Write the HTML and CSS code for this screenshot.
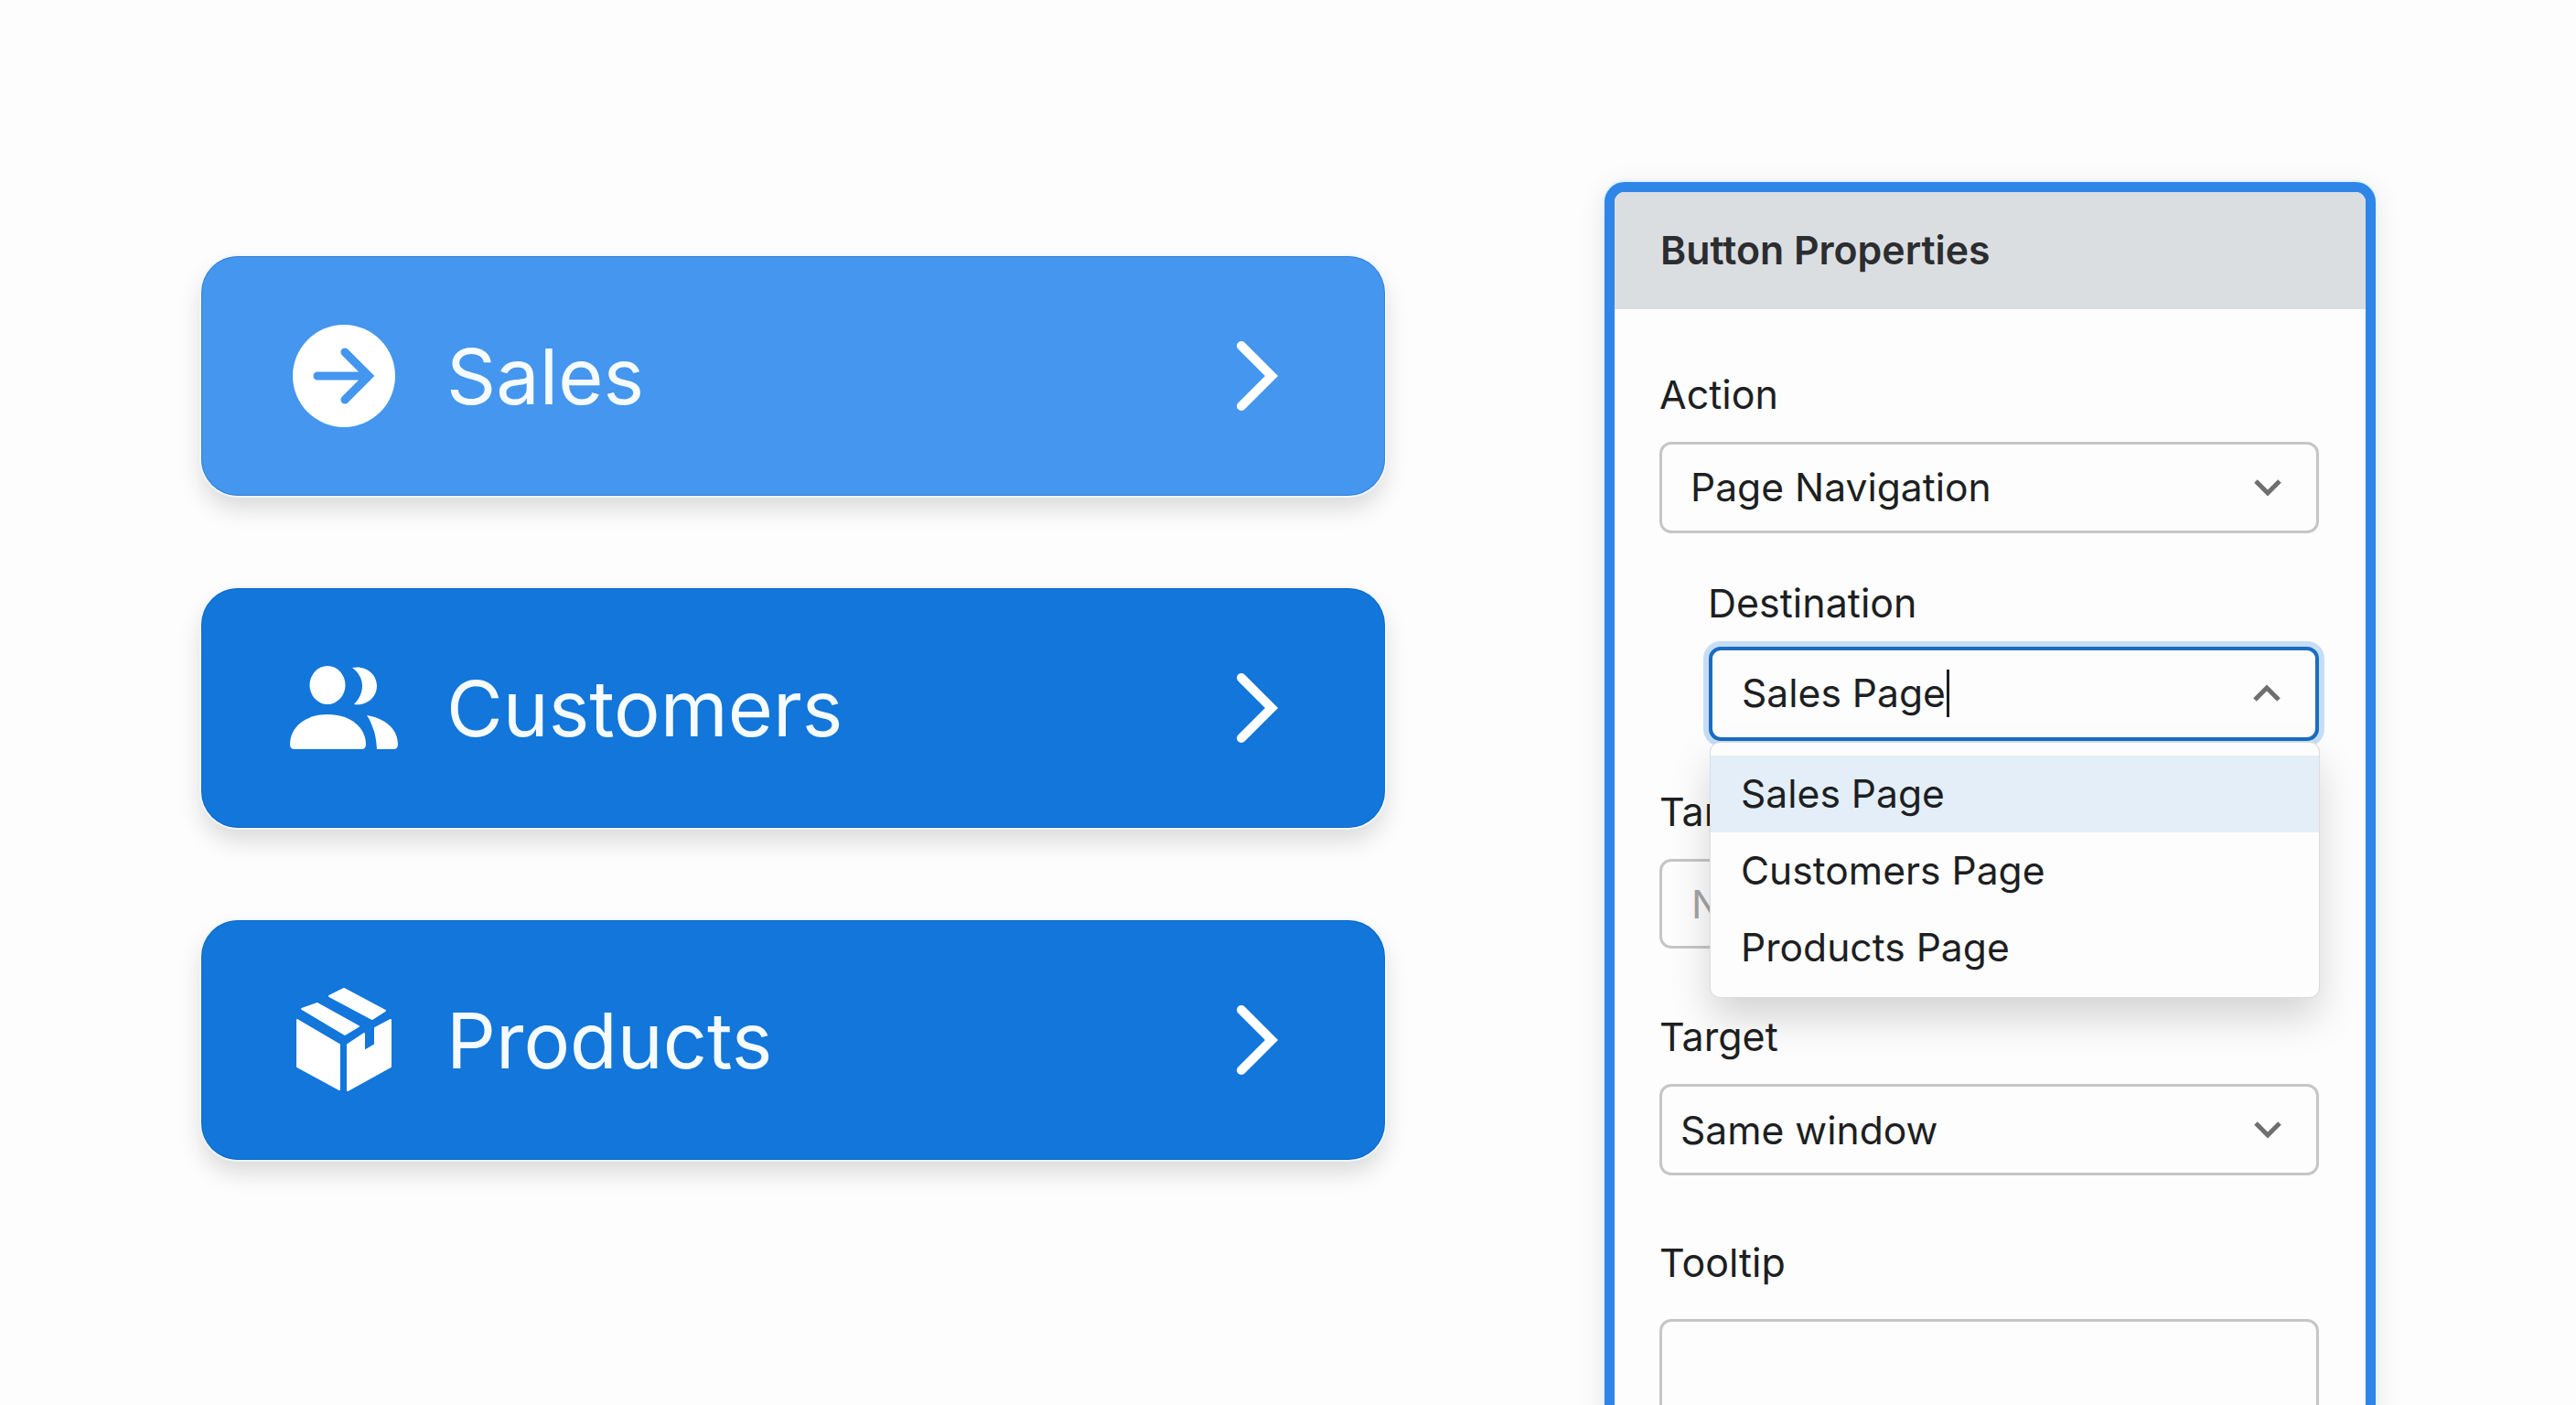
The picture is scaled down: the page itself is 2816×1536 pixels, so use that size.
FILE: index.html
```html
<!DOCTYPE html>
<html lang="en">
<head>
<meta charset="utf-8">
<title>Button Properties</title>
<link rel="stylesheet" href="styles.css">
</head>
<body>
<main class="page">
  <section class="nav-list">
    <a class="nav-btn nav-btn-light">
      <svg class="nav-icon" viewBox="316 351 120 120" width="120" height="120">
        <circle cx="376" cy="411" r="56" fill="#fff"/>
        <path d="M347 411H403M377 385L403 411L377 437" fill="none" stroke="#4496ee" stroke-width="9" stroke-linecap="round" stroke-linejoin="miter"/>
      </svg>
      <span class="nav-label">Sales</span>
      <svg class="nav-chevron" viewBox="0 0 50 80" width="50" height="80"><path d="M8 7L41 40L8 73" fill="none" stroke="#fff" stroke-width="10" stroke-linecap="round"/></svg>
    </a>
    <a class="nav-btn">
      <svg class="nav-icon" viewBox="316 715 120 120" width="120" height="120" fill="#fff">
        <ellipse cx="358" cy="750" rx="19.5" ry="21"/>
        <path d="M385 731C400 728 412 738 412 751C412 764 400 773 387 771C393 765 396 758 396 751C396 743 392 736 385 731Z"/>
        <path d="M317 815C317 795 335 782 358 782C383 782 400 796 400 815Q400 820 395 820H322Q317 820 317 815Z"/>
        <path d="M401 783C420 786 435 797 435 815Q435 820 430 820H412Q411 805 408 798C406 792 404 787 401 783Z"/>
      </svg>
      <span class="nav-label">Customers</span>
      <svg class="nav-chevron" viewBox="0 0 50 80" width="50" height="80"><path d="M8 7L41 40L8 73" fill="none" stroke="#fff" stroke-width="10" stroke-linecap="round"/></svg>
    </a>
    <a class="nav-btn">
      <svg class="nav-icon" viewBox="316 1078 120 120" width="120" height="120" fill="#fff" stroke="#fff" stroke-width="2" stroke-linejoin="round">
        <path d="M325 1116L371 1143V1192L325 1167Z"/>
        <path d="M380 1143L398 1131V1150L410 1143V1125L427 1116V1167L380 1193Z"/>
        <path d="M330 1104L347 1098L392 1123L377 1132Z"/>
        <path d="M360 1090L376 1082L421 1106L407 1115Z"/>
      </svg>
      <span class="nav-label">Products</span>
      <svg class="nav-chevron" viewBox="0 0 50 80" width="50" height="80"><path d="M8 7L41 40L8 73" fill="none" stroke="#fff" stroke-width="10" stroke-linecap="round"/></svg>
    </a>
  </section>

  <aside class="panel">
    <header class="panel-head"><h2 class="panel-title">Button Properties</h2></header>
    <div class="panel-body">
      <div class="field">
        <label class="label">Action</label>
        <div class="select select-nav"><span>Page Navigation</span>
          <svg class="caret-icon" viewBox="0 0 32 20" width="32" height="20"><path d="M3 3L16 16L29 3" fill="none" stroke="#6f6f6f" stroke-width="5"/></svg>
        </div>
      </div>
      <div class="field field-dest">
        <label class="label label-dest">Destination</label>
        <div class="combo">
          <div class="select select-focus"><span class="typed">Sales Page<i class="text-cursor"></i></span>
            <svg class="caret-icon" viewBox="0 0 32 20" width="32" height="20"><path d="M3 17L16 4L29 17" fill="none" stroke="#6f6f6f" stroke-width="5"/></svg>
          </div>
          <ul class="menu">
            <li class="menu-item menu-item-active">Sales Page</li>
            <li class="menu-item">Customers Page</li>
            <li class="menu-item">Products Page</li>
          </ul>
        </div>
      </div>
      <div class="field field-hidden">
        <label class="label">Target</label>
        <div class="select select-muted"><span>None</span></div>
      </div>
      <div class="field field-target">
        <label class="label">Target</label>
        <div class="select select-same"><span>Same window</span>
          <svg class="caret-icon" viewBox="0 0 32 20" width="32" height="20"><path d="M3 3L16 16L29 3" fill="none" stroke="#6f6f6f" stroke-width="5"/></svg>
        </div>
      </div>
      <div class="field field-tooltip">
        <label class="label">Tooltip</label>
        <div class="textarea"></div>
      </div>
    </div>
  </aside>
</main>
</body>
</html>
```
FILE: styles.css
```css
* { box-sizing: border-box; }
html, body { margin: 0; padding: 0; }
body {
  background: #fdfdfd;
  font-family: Inter, "Liberation Sans", sans-serif;
  color: #1d1f22;
  overflow: hidden;
}
.page {
  display: flex;
  align-items: flex-start;
  width: 2816px;
  height: 1536px;
  overflow: hidden;
}
.nav-list {
  display: flex;
  flex-direction: column;
  gap: 101px;
  flex: none;
  width: 1294px;
  margin: 280px 0 0 220px;
}
.nav-btn {
  display: flex;
  align-items: center;
  height: 262px;
  padding: 0 115px 0 96px;
  border-radius: 40px;
  background: #1276da;
  color: #f6fbff;
  box-shadow: inset 0 0 0 1px rgba(0, 50, 110, .22), 0 0 0 2px #eef7ff, 0 14px 26px rgba(0, 0, 0, .14);
}
.nav-btn-light { background: #4496ee; }
.nav-icon { flex: none; }
.nav-label {
  flex: 1;
  margin-left: 52px;
  font-size: 84.5px;
  line-height: 100px;
}
.nav-chevron { flex: none; }
.panel {
  flex: none;
  width: 843px;
  height: 1420px;
  margin: 199px 0 0 240px;
  border: 11px solid #2f86e8;
  border-radius: 22px;
  background: #fdfdfd;
  overflow: hidden;
  box-shadow: 0 0 0 2px #dff3ff, 0 6px 30px rgba(0, 0, 0, .1);
}
.panel-head {
  display: flex;
  align-items: center;
  height: 128px;
  padding: 0 48px 2px 50px;
  background: #dbdee1;
}
.panel-title {
  margin: 0;
  font-size: 42.8px;
  font-weight: 600;
  color: #2b2d30;
}
.panel-body { padding: 67px 51px 0 49px; }
.label {
  display: block;
  font-size: 43px;
  line-height: 52px;
}
.select {
  position: relative;
  display: flex;
  align-items: center;
  justify-content: space-between;
  height: 100px;
  margin-top: 26px;
  border: 3px solid #c6c6c6;
  border-radius: 13px;
  background: #fdfdfd;
  font-size: 42.6px;
  padding-right: 37px;
}
.select-nav { padding-left: 31px; }
.select-nav span { margin-bottom: 2px; }
.select-same { padding-left: 20px; }
.select-muted { padding-left: 32px; color: #a4a4a4; height: 98px; }
.field-dest { margin: 50px 0 0 54px; }
.label-dest { margin-left: -1px; }
.combo { position: relative; margin-top: 22px; }
.select-focus {
  height: 103px;
  margin-top: 0;
  padding-left: 32px;
  padding-bottom: 2px;
  border: 4px solid #1a6cc0;
  box-shadow: 0 0 0 6px #c5ddf6;
}
.typed { display: inline-flex; align-items: center; }
.text-cursor {
  display: inline-block;
  width: 3px;
  height: 52px;
  margin-left: 1px;
  background: #1d1f22;
}
.menu {
  position: absolute;
  z-index: 2;
  top: 105px;
  left: 2px;
  right: 0;
  margin: 0;
  padding: 14px 0 12px;
  list-style: none;
  border-radius: 10px;
  background: #fdfdfd;
  font-size: 42.6px;
  box-shadow: 0 0 0 1px #dadde0, 0 22px 44px rgba(0, 0, 0, .17);
}
.menu-item {
  height: 84px;
  padding-left: 33px;
  line-height: 84px;
}
.menu-item-active { background: #e4eef9; }
.field-hidden { margin-top: 51px; }
.field-target { margin-top: 70px; }
.field-tooltip { margin-top: 69px; }
.textarea {
  height: 300px;
  margin-top: 36px;
  border: 3px solid #c6c6c6;
  border-radius: 13px;
}
```
